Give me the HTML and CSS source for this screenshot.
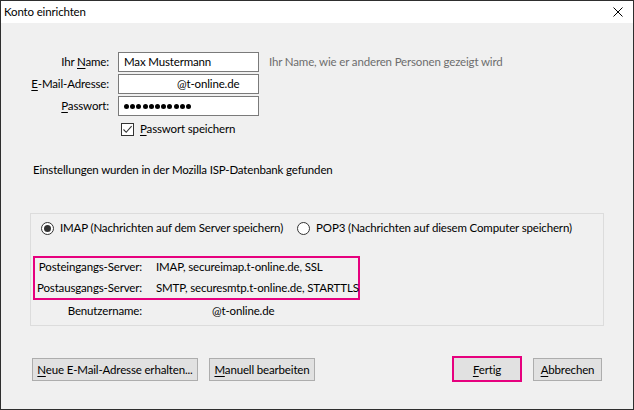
FILE: index.html
```html
<!DOCTYPE html>
<html lang="de">
<head>
    <meta charset="UTF-8">
    <title>Konto einrichten</title>
    <link rel="stylesheet" href="styles.css">
</head>
<body>
    <div class="window">
        <!-- Titelleiste -->
        <div class="titlebar">
            <span class="title">Konto einrichten</span>
            <svg class="close" width="10" height="10" viewBox="0 0 10 10">
                <path d="M0.5 0.5 L9.5 9.5 M9.5 0.5 L0.5 9.5" stroke="#000" stroke-width="1" fill="none"/>
            </svg>
        </div>

        <div class="content">
            <!-- Kontodaten -->
            <div class="fields">
                <span class="field-label">Ihr <u>N</u>ame:</span>
                <div class="input">Max Mustermann</div>
                <span class="hint">Ihr Name, wie er anderen Personen gezeigt wird</span>

                <span class="field-label"><u>E</u>-Mail-Adresse:</span>
                <div class="input input-email">@t-online.de</div>
                <span></span>

                <span class="field-label"><u>P</u>asswort:</span>
                <div class="input input-password">
                    <i></i><i></i><i></i><i></i><i></i><i></i><i></i><i></i><i></i><i></i><i></i>
                </div>
                <span></span>

                <span></span>
                <div class="check">
                    <span class="checkbox">
                        <svg width="11" height="11" viewBox="0 0 11 11">
                            <path d="M1.5 5.5 L4.2 8.3 L9.6 2.2" stroke="#333" stroke-width="1.1" fill="none"/>
                        </svg>
                    </span>
                    <span><u>P</u>asswort speichern</span>
                </div>
            </div>

            <p class="status">Einstellungen wurden in der Mozilla ISP-Datenbank gefunden</p>

            <!-- Protokoll und Server -->
            <div class="group">
                <div class="protocols">
                    <div class="radio-option">
                        <span class="radio checked"></span>
                        <span>IMAP (Nachrichten auf dem Server speichern)</span>
                    </div>
                    <div class="radio-option">
                        <span class="radio"></span>
                        <span>POP3 (Nachrichten auf diesem Computer speichern)</span>
                    </div>
                </div>

                <div class="servers highlight">
                    <span class="server-label">Posteingangs-Server:</span>
                    <span>IMAP, secureimap.t-online.de, SSL</span>
                    <span class="server-label">Postausgangs-Server:</span>
                    <span>SMTP, securesmtp.t-online.de, STARTTLS</span>
                </div>

                <div class="servers user">
                    <span class="server-label">Benutzername:</span>
                    <span class="user-value">@t-online.de</span>
                </div>
            </div>

            <!-- Schaltflächen -->
            <div class="buttons">
                <div class="button-group">
                    <button class="btn btn-new"><u>N</u>eue E-Mail-Adresse erhalten...</button>
                    <button class="btn btn-manual"><u>M</u>anuell bearbeiten</button>
                </div>
                <div class="button-group">
                    <button class="btn btn-done"><u>F</u>ertig</button>
                    <button class="btn btn-cancel"><u>A</u>bbrechen</button>
                </div>
            </div>
        </div>
    </div>
</body>
</html>
```

FILE: styles.css
```css
/* Grundlayout */
body {
    margin: 0;
    font-family: Lato, "Liberation Sans", sans-serif;
    font-size: 11.5px;
    letter-spacing: -0.15px;
    line-height: 16px;
    color: #000000;
    white-space: nowrap;
}

u {
    text-decoration: underline;
    text-underline-offset: 2px;
}

.window {
    width: 634px;
    height: 410px;
    box-sizing: border-box;
    border: 1px solid #2e2e2e;
    display: flex;
    flex-direction: column;
    background-color: #f0f0f0;
}

/* Titelleiste */
.titlebar {
    height: 22px;
    background-color: #ffffff;
    display: flex;
    align-items: center;
    justify-content: space-between;
    padding: 0 10px 0 3px;
    flex-shrink: 0;
}

.content {
    flex: 1;
    padding: 29px 0 0 0;
}

/* Kontodaten */
.fields {
    display: grid;
    grid-template-columns: 108px 141px auto;
    column-gap: 9px;
    row-gap: 2px;
    align-items: center;
}

.field-label {
    text-align: right;
}

.input {
    height: 20px;
    box-sizing: border-box;
    border: 1px solid #7a7a7a;
    background-color: #ffffff;
    padding: 0 5px;
    display: flex;
    align-items: center;
}

.input-email {
    padding-left: 58px;
}

.input-password {
    gap: 1.2px;
}

.input-password i {
    width: 5px;
    height: 5px;
    border-radius: 50%;
    background-color: #000000;
}

.hint {
    color: #6d6d6d;
    padding-left: 1px;
}

.check {
    display: flex;
    align-items: center;
    gap: 6px;
    padding: 3px 0 0 3px;
}

.checkbox {
    width: 13px;
    height: 13px;
    box-sizing: border-box;
    border: 1px solid #333333;
    background-color: #ffffff;
    display: flex;
    align-items: center;
    justify-content: center;
}

.status {
    margin: 25px 0 0 32px;
}

/* Gruppe */
.group {
    margin: 35px 29px 0 29px;
    height: 113px;
    box-sizing: border-box;
    border: 1px solid #dcdcdc;
    padding: 6px 0 0 2px;
}

.protocols {
    display: flex;
    padding-left: 8px;
}

.radio-option {
    display: flex;
    align-items: center;
    gap: 6px;
}

.radio-option + .radio-option {
    margin-left: 14px;
}

.radio {
    width: 13px;
    height: 13px;
    box-sizing: border-box;
    border: 1px solid #333333;
    border-radius: 50%;
    background-color: #ffffff;
    display: flex;
    align-items: center;
    justify-content: center;
}

.radio.checked::after {
    content: "";
    width: 7px;
    height: 7px;
    border-radius: 50%;
    background-color: #333333;
}

.servers {
    display: grid;
    grid-template-columns: 107px auto;
    column-gap: 14px;
    row-gap: 5px;
}

.server-label {
    text-align: right;
}

.highlight {
    width: 327px;
    box-sizing: border-box;
    border: 2px solid #e6007e;
    margin-top: 20px;
    padding: 1px 0 2px 0;
}

.user {
    width: 327px;
    padding: 3px 0 0 2px;
    box-sizing: border-box;
}

.user-value {
    padding-left: 56px;
}

/* Schaltflächen */
.buttons {
    display: flex;
    justify-content: space-between;
    align-items: center;
    margin: 30px 31px 0 31px;
}

.button-group {
    display: flex;
    align-items: center;
    gap: 11px;
}

.btn {
    font-family: inherit;
    font-size: 11.5px;
    letter-spacing: -0.15px;
    height: 23px;
    padding: 0;
    background-color: #e1e1e1;
    border: 1px solid #adadad;
    color: #000000;
}

.btn-new {
    width: 166px;
}

.btn-manual {
    width: 106px;
}

.btn-done {
    width: 70px;
    height: 26px;
    border: 2px solid #e6007e;
}

.btn-cancel {
    width: 69px;
}
```
